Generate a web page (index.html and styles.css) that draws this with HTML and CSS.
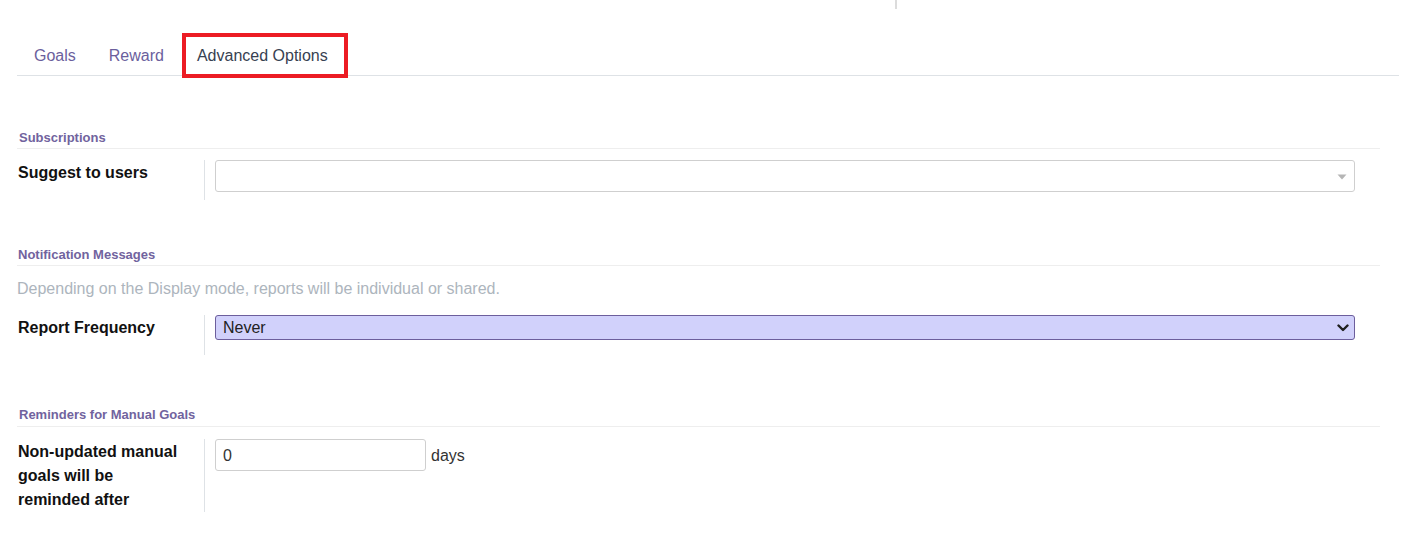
FILE: index.html
```html
<!DOCTYPE html>
<html>
<head>
<meta charset="utf-8">
<link rel="stylesheet" href="styles.css">
</head>
<body>
<div class="topbar"><span class="topsep"></span></div>
<nav class="tabs">
  <a class="tab">Goals</a>
  <a class="tab">Reward</a>
  <a class="tab active">Advanced Options</a>
</nav>
<div class="sheet">
  <div class="group g1">
    <div class="group-title">Subscriptions</div>
    <div class="row">
      <div class="label">Suggest to users</div>
      <div class="field">
        <div class="wrap wide">
          <input class="input many2many" type="text" value="">
          <svg class="caret" width="10" height="6" viewBox="0 0 10 6"><path d="M0.5 0.5 L9.5 0.5 L5 5.5 Z" fill="#b5b5b5"/></svg>
        </div>
      </div>
    </div>
  </div>

  <div class="group g2">
    <div class="group-title">Notification Messages</div>
    <div class="desc">Depending on the Display mode, reports will be individual or shared.</div>
    <div class="row">
      <div class="label">Report Frequency</div>
      <div class="field">
        <div class="wrap wide">
          <select class="select"><option>Never</option></select>
          <svg class="chevron" width="12" height="8" viewBox="0 0 12 8"><path d="M1.5 1.5 L6 6 L10.5 1.5" fill="none" stroke="#1f1f1f" stroke-width="2.4" stroke-linecap="round" stroke-linejoin="round"/></svg>
        </div>
      </div>
    </div>
  </div>

  <div class="group g3">
    <div class="group-title">Reminders for Manual Goals</div>
    <div class="row">
      <div class="label tall">Non-updated manual goals will be reminded after</div>
      <div class="field inline">
        <input class="input days" type="text" value="0">
        <span class="unit">days</span>
      </div>
    </div>
  </div>
</div>
</body>
</html>
```

FILE: styles.css
```css
* { box-sizing: border-box; }
html, body { margin: 0; padding: 0; background: #fff; }
body {
  font-family: "Liberation Sans", Arial, sans-serif;
  font-size: 16px;
  color: #212529;
}
.topbar { height: 8px; display: flex; }
.topsep { margin-left: 895px; width: 2px; height: 9px; background: #dcdcdc; }

.tabs {
  display: flex;
  align-items: flex-start;
  margin: 25px 5px 0 17px;
  height: 43px;
  border-bottom: 1px solid #dee2e6;
}
.tab {
  display: block;
  height: 42px;
  line-height: 45px;
  padding: 0 16px 0 17px;
  color: #6b5f9d;
  font-size: 16px;
  white-space: nowrap;
}
.tab.active {
  margin-left: 2px;
  height: 45px;
  margin-bottom: -3px;
  line-height: 37px;
  border: 4px solid #ec1c24;
  padding: 0 16px 0 11px;
  color: #374151;
  background: transparent;
}

.sheet { margin-left: 17px; width: 1363px; }
.group-title {
  font-size: 13px;
  font-weight: bold;
  color: #71639e;
  line-height: 16px;
  padding: 0 0 2px 2px;
  border-bottom: 1px solid #eeeeee;
  margin-bottom: 11px;
}
.g1 { padding-top: 54px; }
.g2 { padding-top: 46px; }
.g2 .group-title { padding-left: 1px; padding-top: 1px; }
.g3 { padding-top: 52px; }
.g3 .group-title { padding-bottom: 3px; margin-bottom: 12px; }

.desc { color: #adb5bd; line-height: 24px; margin-top: 0; margin-bottom: 14px; }

.row { display: flex; align-items: stretch; }
.label {
  width: 188px;
  flex: none;
  padding: 1px 21px 0 1px;
  border-right: 1px solid #dee2e6;
  font-weight: bold;
  line-height: 24px;
  min-height: 40px;
  color: #111;
}
.label.tall { min-height: 72px; }
.field { flex: 1; padding: 0 25px 0 10px; }
.field.inline { display: flex; align-items: flex-start; }
.wrap { position: relative; }
.wrap.wide { width: 1140px; }

.input {
  font-family: "Liberation Sans", Arial, sans-serif;
  font-size: 16px;
  color: #333;
  height: 32px;
  border: 1px solid #cfcfcf;
  border-radius: 3px;
  padding: 1px 7px 0;
  background: #fff;
  outline: none;
  display: block;
}
.many2many { width: 100%; }
.caret { position: absolute; right: 8px; top: 14px; }

.select {
  -webkit-appearance: none;
  appearance: none;
  display: block;
  width: 100%;
  height: 25px;
  font-family: "Liberation Sans", Arial, sans-serif;
  font-size: 16px;
  color: #222;
  background: #d1d1fb;
  border: 1px solid #6c5e9c;
  border-radius: 3px;
  padding: 0 7px;
  outline: none;
}
.chevron { position: absolute; right: 6px; top: 9px; }

.days { width: 211px; }
.unit { margin-left: 5px; line-height: 32px; padding-top: 1px; color: #333; }
```
